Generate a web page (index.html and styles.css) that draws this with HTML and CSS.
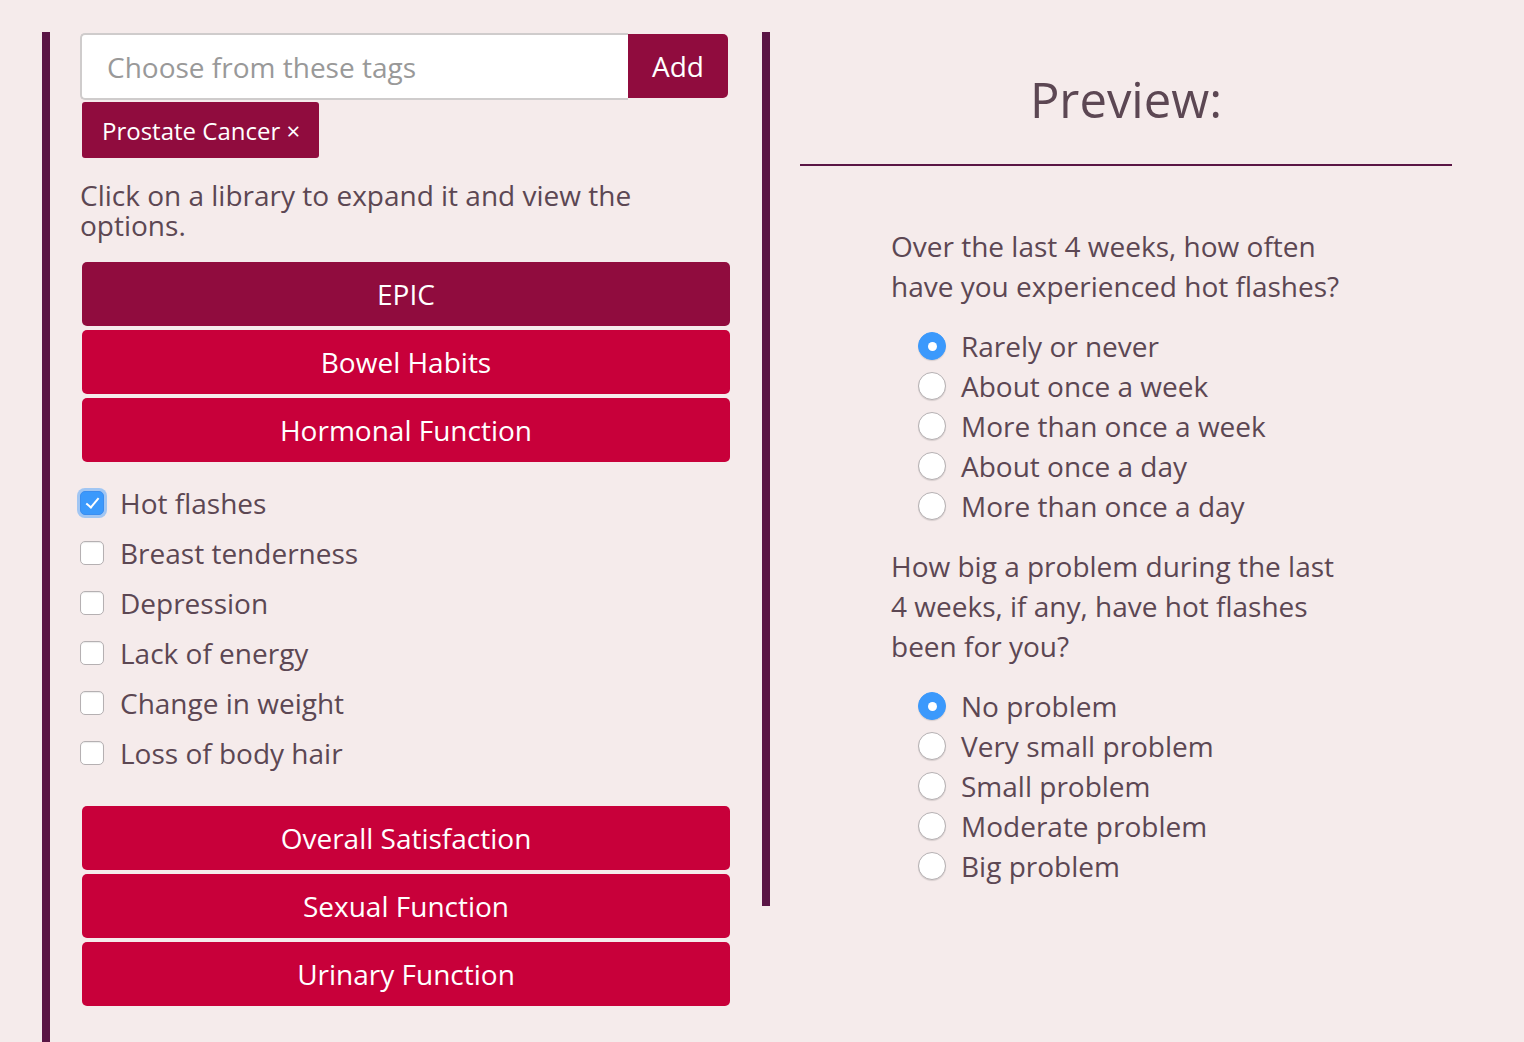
FILE: index.html
```html
<!DOCTYPE html>
<html>
<head>
<meta charset="utf-8">
<link rel="stylesheet" href="styles.css">
</head>
<body>
<div class="page">
  <div class="left">
    <div class="tag-input">
      <input class="tag-field" type="text" placeholder="Choose from these tags">
      <button class="add-btn">Add</button>
    </div>
    <div class="tags">
      <span class="tag">Prostate Cancer ×</span>
    </div>
    <p class="hint">Click on a library to expand it and view the options.</p>
    <div class="libs">
      <button class="lib lib-active">EPIC</button>
      <button class="lib">Bowel Habits</button>
      <button class="lib">Hormonal Function</button>
    </div>
    <ul class="checks">
      <li><input type="checkbox" class="cb" checked><span>Hot flashes</span></li>
      <li><input type="checkbox" class="cb"><span>Breast tenderness</span></li>
      <li><input type="checkbox" class="cb"><span>Depression</span></li>
      <li><input type="checkbox" class="cb"><span>Lack of energy</span></li>
      <li><input type="checkbox" class="cb"><span>Change in weight</span></li>
      <li><input type="checkbox" class="cb"><span>Loss of body hair</span></li>
    </ul>
    <div class="libs libs-lower">
      <button class="lib">Overall Satisfaction</button>
      <button class="lib">Sexual Function</button>
      <button class="lib">Urinary Function</button>
    </div>
  </div>
  <div class="divider"></div>
  <div class="right">
    <h1 class="preview-title">Preview:</h1>
    <div class="questions">
      <div class="question">
        <p class="q-text">Over the last 4 weeks, how often have you experienced hot flashes?</p>
        <ul class="options">
          <li><input type="radio" class="rb" name="q1" checked><span>Rarely or never</span></li>
          <li><input type="radio" class="rb" name="q1"><span>About once a week</span></li>
          <li><input type="radio" class="rb" name="q1"><span>More than once a week</span></li>
          <li><input type="radio" class="rb" name="q1"><span>About once a day</span></li>
          <li><input type="radio" class="rb" name="q1"><span>More than once a day</span></li>
        </ul>
      </div>
      <div class="question">
        <p class="q-text">How big a problem during the last 4 weeks, if any, have hot flashes been for you?</p>
        <ul class="options">
          <li><input type="radio" class="rb" name="q2" checked><span>No problem</span></li>
          <li><input type="radio" class="rb" name="q2"><span>Very small problem</span></li>
          <li><input type="radio" class="rb" name="q2"><span>Small problem</span></li>
          <li><input type="radio" class="rb" name="q2"><span>Moderate problem</span></li>
          <li><input type="radio" class="rb" name="q2"><span>Big problem</span></li>
        </ul>
      </div>
    </div>
  </div>
</div>
</body>
</html>
```
FILE: styles.css
```css
html, body {
  margin: 0;
  padding: 0;
  background: #f5ebeb;
  overflow: hidden;
}
body {
  font-family: "Open Sans", "Noto Sans", sans-serif;
  color: #5c4753;
}
.page {
  display: flex;
  align-items: flex-start;
  padding: 32px 0 0 42px;
  height: 1010px;
}
.left {
  box-sizing: border-box;
  width: 688px;
  height: 1040px;
  border-left: 8px solid #5a1545;
  padding-left: 30px;
  display: flex;
  flex-direction: column;
}
.tag-input {
  display: flex;
  align-items: center;
  width: 648px;
}
.tag-field {
  box-sizing: border-box;
  width: 548px;
  height: 67px;
  margin-top: 1px;
  border: 2px solid #cfcccc;
  border-right: none;
  border-radius: 5px 0 0 5px;
  background: #fff;
  padding: 0 0 0 25px;
  font-family: "Open Sans", sans-serif;
  font-size: 28px;
  outline: none;
}
.tag-field::placeholder {
  color: #999;
}
.add-btn {
  width: 100px;
  height: 64px;
  border: none;
  border-radius: 0 5px 5px 0;
  background: #900c3e;
  color: #fff;
  font-family: "Open Sans", sans-serif;
  font-size: 28px;
  padding: 0;
}
.tags {
  display: flex;
  padding-left: 2px;
  margin-top: 2px;
}
.tag {
  display: inline-flex;
  align-items: center;
  height: 56px;
  padding: 0 19px 0 20px;
  background: #900c3e;
  color: #fff;
  border-radius: 3px;
  font-size: 24px;
}
.hint {
  margin: 22px 0 0 0;
  font-size: 28px;
  line-height: 30px;
  width: 600px;
}
.libs {
  display: flex;
  flex-direction: column;
  gap: 4px;
  padding-left: 2px;
  margin-top: 22px;
}
.libs-lower {
  margin-top: 28px;
}
.lib {
  width: 648px;
  height: 64px;
  border: none;
  border-radius: 5px;
  background: #c8003a;
  color: #fff;
  font-family: "Open Sans", sans-serif;
  font-size: 28px;
  padding: 0;
}
.lib-active {
  background: #900c3e;
}
.checks {
  list-style: none;
  margin: 16px 0 0 0;
  padding: 0;
}
.checks li {
  display: flex;
  align-items: center;
  height: 50px;
}
.checks li span {
  font-size: 28px;
  margin-left: 16px;
}
.cb {
  -webkit-appearance: none;
  appearance: none;
  margin: 0;
  box-sizing: border-box;
  width: 24px;
  height: 24px;
  border: 1px solid #b5b0b2;
  border-radius: 5px;
  background: #fff;
  box-shadow: inset 0 1px 1px rgba(0,0,0,0.08);
  position: relative;
}
.cb:checked {
  background: #3b99fc;
  border-color: #3b8ef0;
  box-shadow: 0 0 0 3px rgba(59,153,252,0.45);
}
.cb:checked::after {
  content: "";
  position: absolute;
  left: 8px;
  top: 3px;
  width: 5px;
  height: 11px;
  border: solid #fff;
  border-width: 0 2.5px 2.5px 0;
  transform: rotate(40deg);
}
.divider {
  width: 8px;
  height: 874px;
  background: #5a1545;
  margin-left: 32px;
}
.right {
  box-sizing: border-box;
  width: 682px;
  padding-left: 30px;
}
.preview-title {
  margin: 0;
  padding-top: 36px;
  height: 62px;
  padding-bottom: 34px;
  font-size: 49px;
  font-weight: 400;
  line-height: 62px;
  text-align: center;
  border-bottom: 2px solid #5a1545;
  width: 652px;
}
.questions {
  padding: 60px 0 0 91px;
}
.question {
  margin-bottom: 20px;
}
.q-text {
  margin: 0;
  font-size: 28px;
  line-height: 40px;
  width: 455px;
}
.options {
  list-style: none;
  margin: 20px 0 0 0;
  padding: 0 0 0 27px;
}
.options li {
  display: flex;
  align-items: center;
  height: 40px;
}
.options li span {
  font-size: 28px;
  margin-left: 15px;
}
.rb {
  -webkit-appearance: none;
  appearance: none;
  margin: 0;
  box-sizing: border-box;
  width: 28px;
  height: 28px;
  border-radius: 50%;
  border: 1px solid #b5b0b2;
  background: #fff;
  box-shadow: 0 1px 1px rgba(0,0,0,0.12);
  position: relative;
}
.rb:checked {
  background: #3b99fc;
  border-color: #3b99fc;
}
.rb:checked::after {
  content: "";
  position: absolute;
  left: 50%;
  top: 50%;
  width: 9px;
  height: 9px;
  margin: -4.5px 0 0 -4.5px;
  border-radius: 50%;
  background: #fff;
}
```
